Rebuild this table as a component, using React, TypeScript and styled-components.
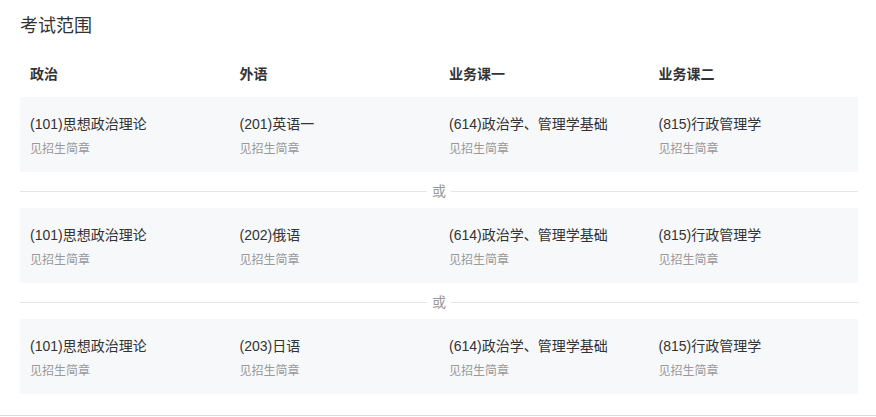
import React from "react";
import styled, { createGlobalStyle } from "styled-components";

const GlobalStyle = createGlobalStyle`
  html, body {
    margin: 0;
    padding: 0;
    background: #ffffff;
  }
  body {
    font-family: "Liberation Sans", "Noto Sans CJK SC", sans-serif;
    color: #333333;
  }
`;

const Page = styled.div`
  width: 876px;
  box-sizing: border-box;
  padding: 14px 18px 21px 20px;
  border-bottom: 1px solid #dcdcdc;
`;

const Title = styled.h2`
  margin: 0;
  font-size: 18px;
  line-height: 24px;
  font-weight: normal;
  color: #333333;
`;

const Grid = styled.div`
  display: grid;
  grid-template-columns: repeat(4, 1fr);
`;

const HeaderRow = styled(Grid)`
  padding: 26px 0 13px;
`;

const HeaderCell = styled.div`
  padding-left: 10px;
  font-size: 14px;
  line-height: 20px;
  font-weight: bold;
  color: #333333;
`;

const Card = styled(Grid)`
  background: #f7f8fa;
  height: 75px;
  box-sizing: border-box;
  padding-top: 17px;
`;

const Cell = styled.div`
  padding-left: 10px;
  display: flex;
  flex-direction: column;
`;

const Name = styled.div`
  font-size: 14px;
  line-height: 20px;
  color: #333333;
`;

const Note = styled.div`
  margin-top: 6px;
  font-size: 12px;
  line-height: 18px;
  color: #999999;
`;

const Divider = styled.div`
  height: 36px;
  box-sizing: border-box;
  padding-top: 2px;
  display: flex;
  align-items: center;
  gap: 5px;
  &::before,
  &::after {
    content: "";
    flex: 1;
    height: 1px;
    background: #e4e4e4;
  }
`;

const DividerText = styled.span`
  font-size: 14px;
  line-height: 20px;
  color: #999999;
`;

const headers = ["政治", "外语", "业务课一", "业务课二"];

const plans = [
  ["(101)思想政治理论", "(201)英语一", "(614)政治学、管理学基础", "(815)行政管理学"],
  ["(101)思想政治理论", "(202)俄语", "(614)政治学、管理学基础", "(815)行政管理学"],
  ["(101)思想政治理论", "(203)日语", "(614)政治学、管理学基础", "(815)行政管理学"],
];

export default function App() {
  return (
    <>
      <GlobalStyle />
      <Page>
        <Title>考试范围</Title>
        <HeaderRow>
          {headers.map((h) => (
            <HeaderCell key={h}>{h}</HeaderCell>
          ))}
        </HeaderRow>
        {plans.map((row, i) => (
          <React.Fragment key={i}>
            {i > 0 && (
              <Divider>
                <DividerText>或</DividerText>
              </Divider>
            )}
            <Card>
              {row.map((name, j) => (
                <Cell key={j}>
                  <Name>{name}</Name>
                  <Note>见招生简章</Note>
                </Cell>
              ))}
            </Card>
          </React.Fragment>
        ))}
      </Page>
    </>
  );
}
